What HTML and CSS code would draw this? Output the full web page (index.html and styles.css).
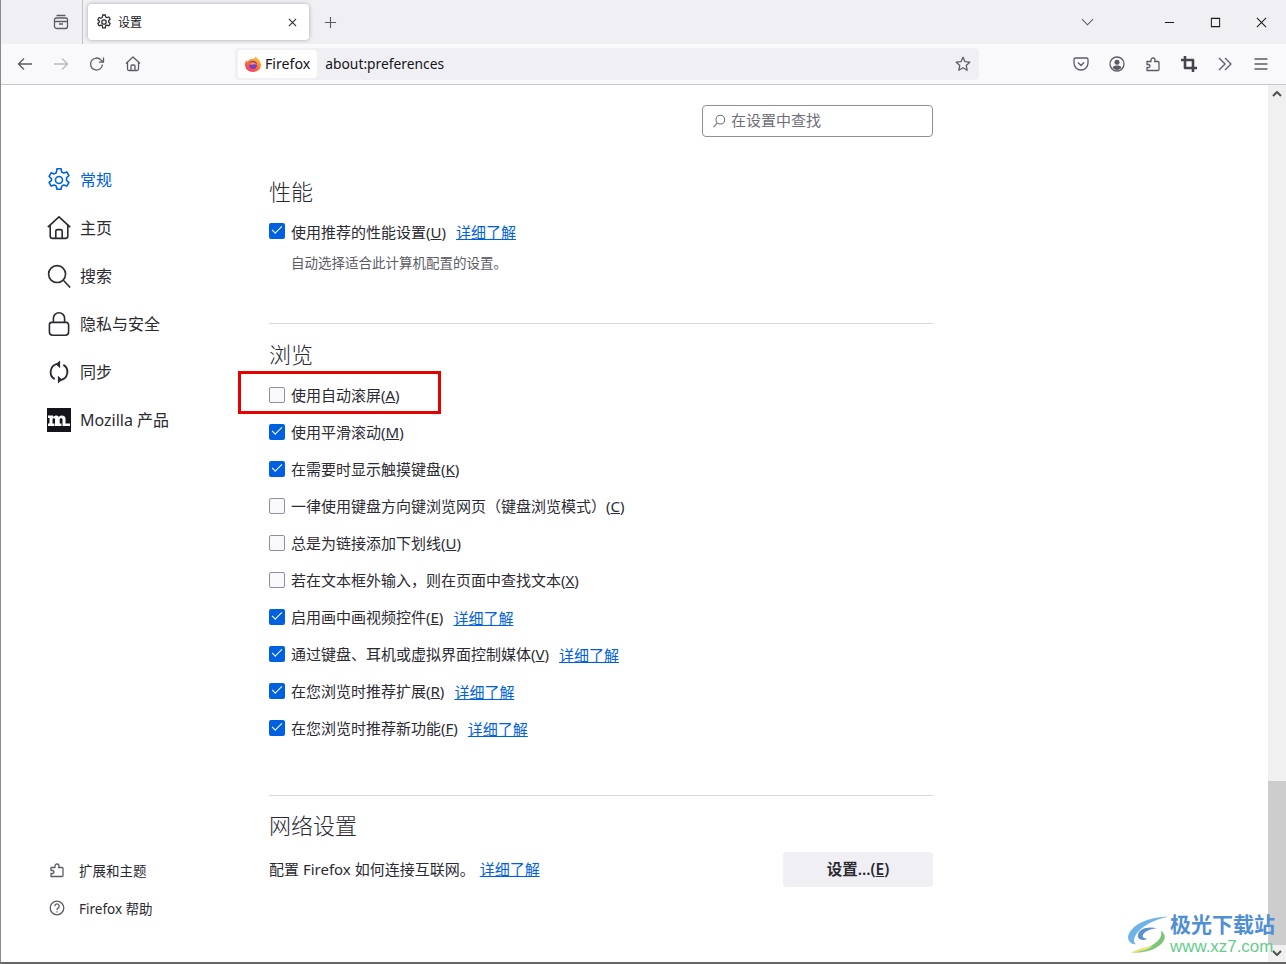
FILE: index.html
```html
<!DOCTYPE html>
<html lang="zh-CN">
<head>
    <meta charset="UTF-8">
    <title>设置</title>
    <link rel="stylesheet" href="styles.css">
</head>
<body>
    <!-- tab strip -->
    <div class="tabbar">
        <div class="tabs-side">
            <svg class="ico" viewBox="0 0 16 16"><path d="M3.500 1.500h9M1.500 5.500a1.500 1.500 0 0 1 1.500-1.500h10a1.500 1.500 0 0 1 1.500 1.500v7a2 2 0 0 1-2 2h-9a2 2 0 0 1-2-2zM1.500 7.500h13M6 10h4"/></svg>
        </div>
        <div class="tab">
            <svg class="ico tab-ico" viewBox="0 0 16 16"><use href="#gear"/></svg>
            <span class="tab-title">设置</span>
            <svg class="tab-close" viewBox="0 0 10 10"><path d="M1 1l8 8M9 1l-8 8"/></svg>
        </div>
        <svg class="new-tab" viewBox="0 0 14 14"><path d="M7 1v12M1 7h12"/></svg>
        <div class="tabbar-right">
            <svg class="tab-list" viewBox="0 0 14 8"><path d="M1 1l6 6 6-6"/></svg>
            <div class="win-btns">
                <svg viewBox="0 0 12 12"><path d="M1 6h10"/></svg>
                <svg viewBox="0 0 12 12"><path d="M1.500 1.500h9v9h-9z"/></svg>
                <svg viewBox="0 0 12 12"><path d="M1 1l10 10M11 1L1 11"/></svg>
            </div>
        </div>
    </div>

    <!-- toolbar -->
    <div class="toolbar">
        <div class="nav-btns">
            <svg class="ico" viewBox="0 0 16 16"><path d="M15 8H1.500M7 2.500L1.500 8 7 13.500"/></svg>
            <svg class="ico faded" viewBox="0 0 16 16"><path d="M1 8h13.500M9 2.500L14.500 8 9 13.500"/></svg>
            <svg class="ico" viewBox="0 0 16 16"><path d="M13.500 8.500a6 6 0 1 1-1.600-4.600L14 6M14.500 1.500V6.200H10"/></svg>
            <svg class="ico" viewBox="0 0 16 16"><use href="#home"/></svg>
        </div>
        <div class="urlbar">
            <div class="identity">
                <svg class="fx-logo" viewBox="0 0 16 16">
                    <defs>
                        <linearGradient id="fx-grad" x1="0.8" y1="0" x2="0.2" y2="1">
                            <stop offset="0" stop-color="#ffd02e"/>
                            <stop offset="0.5" stop-color="#ff7a2e"/>
                            <stop offset="1" stop-color="#f0356e"/>
                        </linearGradient>
                    </defs>
                    <path d="M10.500 0c.3 1.500 2 2 3.500 4 1.500 2 2 3.500 2 5a8 7 0 0 1-16 0c0-2 .5-3.500 1.500-5 0 1 .5 1.500 1 1.500C3.500 4 5 3 7 3c2 0 3.500-1 3.500-3z" fill="url(#fx-grad)"/>
                    <circle cx="8" cy="9" r="4" fill="#7a3bc8"/>
                    <path d="M4 8.500c1-2 3-2.500 5-2 1.500.5 2.500 1.500 3 3-1-1-2-1.500-3-1-1.500.2-3 .2-5 0z" fill="#ff9a2e"/>
                </svg>
                <span class="id-text">Firefox</span>
            </div>
            <span class="url-text">about:preferences</span>
            <svg class="ico url-star" viewBox="0 0 16 16"><path d="M8 1.300l2 4.400 4.800.5-3.600 3.200 1 4.800L8 11.700l-4.200 2.500 1-4.800L1.200 6.200 6 5.700z"/></svg>
        </div>
        <div class="tool-btns">
            <svg class="ico" viewBox="0 0 16 16"><path d="M2.500 2h11A1.500 1.500 0 0 1 15 3.500V7a7 7 0 0 1-14 0V3.500A1.500 1.500 0 0 1 2.500 2zM5 6.500l3 3 3-3"/></svg>
            <svg class="ico" viewBox="0 0 16 16"><circle cx="8" cy="8" r="7"/><circle class="solid" cx="8" cy="6.300" r="2.500"/><path class="solid" d="M3.500 11.500c1-1.500 2.500-2 4.500-2s3.500.5 4.500 2C11.500 13 10 14 8 14s-3.500-1-4.500-2.500z"/></svg>
            <svg class="ico" viewBox="0 0 16 16"><use href="#puzzle"/></svg>
            <svg class="ico crop" viewBox="0 0 16 16"><path d="M4 0v12h12M0 4h12v12"/></svg>
            <svg class="ico" viewBox="0 0 16 16"><path d="M2 2l6 6-6 6M8 2l6 6-6 6"/></svg>
            <svg class="ico" viewBox="0 0 16 16"><path d="M1.500 3h13M1.500 8h13M1.500 13h13"/></svg>
        </div>
    </div>

    <div class="page">
        <aside class="sidebar">
            <nav class="cat-list">
                <a class="cat active">
                    <svg class="cat-ico" viewBox="0.5 0.5 15 15"><use href="#gear"/></svg>
                    <span>常规</span>
                </a>
                <a class="cat">
                    <svg class="cat-ico" viewBox="0.5 0.5 15 15"><use href="#home"/></svg>
                    <span>主页</span>
                </a>
                <a class="cat">
                    <svg class="cat-ico" viewBox="0.5 0.5 15 15"><circle cx="6.800" cy="6.800" r="5.300"/><path d="M10.700 10.700l4.300 4.500"/></svg>
                    <span>搜索</span>
                </a>
                <a class="cat">
                    <svg class="cat-ico" viewBox="0.5 0.5 15 15"><path d="M4.500 7V4.500a3.500 3.500 0 0 1 7 0V7M3.500 7h9A1.500 1.500 0 0 1 14 8.500V13a2 2 0 0 1-2 2H4a2 2 0 0 1-2-2V8.500A1.500 1.500 0 0 1 3.500 7z"/></svg>
                    <span>隐私与安全</span>
                </a>
                <a class="cat">
                    <svg class="cat-ico sync" viewBox="1 1 22 22"><path d="M8 18.500A7.500 7.500 0 0 1 11 4.600M16 5.500A7.500 7.500 0 0 1 13 19.400"/><path class="solid" d="M9 4.800L13 1.500v7zM15 19.200L11 22.500v-7z"/></svg>
                    <span>同步</span>
                </a>
                <a class="cat">
                    <svg class="cat-ico" viewBox="0 0 24 24"><rect class="moz-box" width="24" height="24"/><path class="moz-m" d="M1 7.500h5l.5 1.500c1.200-2 4.300-2 5.300 0 1.200-2 6.200-2.200 6.700 1.200V15.500H23V18h-7.500V11.300c0-1.500-2.800-1.500-2.800 0V15.500H14.500V18H8V11.300c0-1.500-2.500-1.500-2.500 0V15.500H7.500V18H1V15.500H2.500V10H1z"/></svg>
                    <span>Mozilla 产品</span>
                </a>
            </nav>
            <div class="side-footer">
                <a class="side-link">
                    <svg class="ico" viewBox="0 0 16 16"><use href="#puzzle"/></svg>
                    <span>扩展和主题</span>
                </a>
                <a class="side-link">
                    <svg class="ico" viewBox="0 0 16 16"><circle cx="8" cy="8" r="6.800"/><path d="M5.800 6.200a2.200 2.200 0 1 1 3.400 1.800c-.8.500-1.200 1-1.200 2M8 11.300v1.200"/></svg>
                    <span>Firefox 帮助</span>
                </a>
            </div>
        </aside>

        <main class="content">
            <div class="search-row">
                <div class="search-box">
                    <svg class="search-ico" viewBox="0 0 16 16"><circle cx="9.500" cy="6.500" r="5"/><path d="M6 10.500L1.500 15"/></svg>
                    <span class="search-text">在设置中查找</span>
                </div>
            </div>

            <section class="section perf">
                <h2>性能</h2>
                <label class="check"><span class="box on"></span><span>使用推荐的性能设置(<u>U</u>)</span><a class="more">详细了解</a></label>
                <p class="hint">自动选择适合此计算机配置的设置。</p>
            </section>

            <section class="section browse">
                <h2>浏览</h2>
                <div class="check-list">
                    <label class="check marked"><span class="box"></span><span>使用自动滚屏(<u>A</u>)</span></label>
                    <label class="check"><span class="box on"></span><span>使用平滑滚动(<u>M</u>)</span></label>
                    <label class="check"><span class="box on"></span><span>在需要时显示触摸键盘(<u>K</u>)</span></label>
                    <label class="check"><span class="box"></span><span>一律使用键盘方向键浏览网页（键盘浏览模式）(<u>C</u>)</span></label>
                    <label class="check"><span class="box"></span><span>总是为链接添加下划线(<u>U</u>)</span></label>
                    <label class="check"><span class="box"></span><span>若在文本框外输入，则在页面中查找文本(<u>X</u>)</span></label>
                    <label class="check"><span class="box on"></span><span>启用画中画视频控件(<u>E</u>)</span><a class="more">详细了解</a></label>
                    <label class="check"><span class="box on"></span><span>通过键盘、耳机或虚拟界面控制媒体(<u>V</u>)</span><a class="more">详细了解</a></label>
                    <label class="check"><span class="box on"></span><span>在您浏览时推荐扩展(<u>R</u>)</span><a class="more">详细了解</a></label>
                    <label class="check"><span class="box on"></span><span>在您浏览时推荐新功能(<u>F</u>)</span><a class="more">详细了解</a></label>
                </div>
            </section>

            <section class="section network">
                <h2>网络设置</h2>
                <div class="net-row">
                    <p>配置 Firefox 如何连接互联网。<a class="more">详细了解</a></p>
                    <button class="btn">设置...(<u>E</u>)</button>
                </div>
            </section>
        </main>

        <div class="scrollbar">
            <svg class="arrow" viewBox="0 0 10 6"><path d="M1 5l4-4 4 4"/></svg>
            <div class="thumb"></div>
            <svg class="arrow" viewBox="0 0 10 6"><path d="M1 1l4 4 4-4"/></svg>
        </div>

        <!-- watermark over the page -->
        <div class="watermark">
            <svg class="wm-logo" viewBox="0 0 48 42">
                <path d="M46 1C30 1 10 6 3 20c-3 7 3 12 8 11C4 26 14 8 46 1z" fill="#6fb3e8"/>
                <path d="M34 14c-9-3-20 0-21 7-1 5 6 7 10 4-4 0-6-2-4-5 3-4 10-6 15-6z" fill="#5a8fd0"/>
                <path d="M38 16c3 8-6 16-19 20-5 2-10 3-13 4 12 1 32-3 36-15 1-4-1-7-4-9z" fill="#7cc576"/>
                <path d="M6 40c8 0 18-3 24-7-6 1-16 3-20 5z" fill="#eee27a"/>
            </svg>
            <div class="wm-text">
                <div class="wm-title">极光下载站</div>
                <div class="wm-url">www.xz7.com</div>
            </div>
        </div>
    </div>

    <!-- shared icons -->
    <svg class="defs" width="0" height="0">
        <defs>
            <path id="gear" d="M6.700 1h2.600l.4 2 1.300.7 1.900-.7 1.300 2.300-1.500 1.300v1.600l1.500 1.300-1.300 2.300-1.900-.7-1.300.7-.4 2H6.700l-.4-2-1.300-.7-1.900.7-1.300-2.300 1.500-1.300V7.100L1.800 5.800l1.300-2.300 1.900.7 1.300-.7zM8 5.800a2.200 2.200 0 1 0 0 4.400 2.200 2.200 0 0 0 0-4.400z"/>
            <path id="home" d="M1 7.500L8 1l7 6.500M2.500 6.500V13A1.500 1.500 0 0 0 4 14.500h8a1.500 1.500 0 0 0 1.500-1.500V6.500M6 14.500V10a1 1 0 0 1 1-1h2a1 1 0 0 1 1 1v4.500"/>
            <path id="puzzle" d="M5 14.500H2v-3h1.500a1.500 1.500 0 0 0 0-3H2V5.500h4V4a2 2 0 0 1 4 0c0 1-.5 1.500-.5 1.500H13a1 1 0 0 1 1 1v7a1 1 0 0 1-1 1z"/>
        </defs>
    </svg>
</body>
</html>
```

FILE: styles.css
```css
:root {
    --text-color: #15141a;
    --icon-color: #5b5b66;
    --link-color: #0061e0;
    --chrome-bg: #f0f0f4;
    --toolbar-bg: #f9f9fb;
    --line-color: #d7d7db;
}

html, body {
    height: 100%;
}

body {
    margin: 0;
    height: 964px;
    overflow: hidden;
    display: flex;
    flex-direction: column;
    box-sizing: border-box;
    background-color: #fff;
    border-left: 1px solid #8a8a8a;
    border-bottom: 2px solid #666;
    font-family: "Noto Sans", "Noto Sans CJK SC", sans-serif;
    font-size: 15px;
    color: var(--text-color);
}

svg {
    display: block;
    flex: none;
}

.ico {
    width: 16px;
    height: 16px;
    fill: none;
    color: var(--icon-color);
    stroke: var(--icon-color);
    stroke-width: 1.3;
    stroke-linejoin: round;
}

.solid {
    fill: currentColor;
    stroke: none;
}

.defs {
    position: absolute;
}

/* tab strip */
.tabbar {
    height: 44px;
    flex: none;
    display: flex;
    align-items: flex-start;
    background-color: var(--chrome-bg);
}

.tabs-side {
    width: 82px;
    height: 44px;
    box-sizing: border-box;
    padding: 14px 0 0 52px;
    border-right: 1px solid #c4c4c8;
}

.tab {
    width: 221px;
    height: 36px;
    margin: 4px 0 0 5px;
    padding: 0 12px 0 8px;
    box-sizing: border-box;
    display: flex;
    align-items: center;
    background-color: #fff;
    border-radius: 4px;
    box-shadow: 0 0 4px rgba(0,0,0,0.3);
}

.tab-ico {
    stroke: #2b2a33;
}

.tab-title {
    margin-left: 6px;
    font-size: 12px;
    flex: 1;
}

.tab-close {
    width: 9px;
    height: 9px;
    fill: none;
    stroke: #2b2a33;
    stroke-width: 1.2;
}

.new-tab {
    width: 13px;
    height: 13px;
    margin: 16px 0 0 15px;
    fill: none;
    stroke: var(--icon-color);
    stroke-width: 1.2;
}

.tabbar-right {
    flex: 1;
    display: flex;
    justify-content: flex-end;
    align-items: center;
    height: 44px;
}

.tab-list {
    width: 13px;
    height: 8px;
    margin-right: 70px;
    fill: none;
    stroke: #55555e;
    stroke-width: 1.1;
}

.win-btns {
    display: flex;
    gap: 35px;
    padding-right: 19px;
}

.win-btns svg {
    width: 11px;
    height: 11px;
    fill: none;
    stroke: #1a1a1a;
    stroke-width: 1.1;
}

/* toolbar */
.toolbar {
    height: 41px;
    flex: none;
    box-sizing: border-box;
    display: flex;
    align-items: center;
    background-color: var(--toolbar-bg);
    border-bottom: 1px solid #c8c8cc;
}

.nav-btns {
    width: 234px;
    box-sizing: border-box;
    padding-left: 16px;
    display: flex;
    gap: 20px;
}

.faded {
    opacity: 0.4;
}

.urlbar {
    width: 744px;
    height: 32px;
    box-sizing: border-box;
    display: flex;
    align-items: center;
    padding: 0 8px 0 3px;
    background-color: var(--chrome-bg);
    border-radius: 4px;
}

.identity {
    height: 28px;
    padding: 0 7px;
    display: flex;
    align-items: center;
    gap: 4px;
    background-color: #fff;
    border-radius: 4px;
}

.id-text {
    font-size: 14.2px;
    padding-bottom: 2px;
}

.fx-logo {
    width: 16px;
    height: 16px;
}

.url-text {
    margin-left: 8px;
    padding-bottom: 2px;
    flex: 1;
    font-size: 13.8px;
}

.tool-btns {
    margin-left: 94px;
    display: flex;
    gap: 20px;
}

.crop {
    stroke: #45454e;
    stroke-width: 2.6;
}

/* page */
.page {
    flex: 1;
    min-height: 0;
    position: relative;
    display: flex;
}

.sidebar {
    width: 268px;
    flex: none;
    box-sizing: border-box;
    padding: 83px 0 0 46px;
    display: flex;
    flex-direction: column;
    justify-content: space-between;
}

.cat-list {
    display: flex;
    flex-direction: column;
    gap: 24px;
}

.cat {
    height: 24px;
    display: flex;
    align-items: center;
    gap: 9px;
    font-size: 16px;
    color: #2b2a33;
}

.cat span {
    padding-bottom: 2px;
}

.cat-ico {
    width: 24px;
    height: 24px;
    fill: none;
    color: #2b2a33;
    stroke: #2b2a33;
    stroke-width: 1;
    stroke-linejoin: round;
}

.sync {
    stroke-width: 1.7;
}

.cat.active {
    color: var(--link-color);
}

.cat.active .cat-ico {
    stroke: var(--link-color);
}

.moz-box {
    fill: #15141a;
    stroke: none;
}

.moz-m {
    fill: #fff;
    stroke: none;
}

.side-footer {
    padding: 0 0 45px 2px;
    display: flex;
    flex-direction: column;
    gap: 20px;
}

.side-link {
    height: 18px;
    display: flex;
    align-items: center;
    gap: 14px;
    font-size: 13.5px;
    color: #2b2a33;
}

.content {
    width: 664px;
    flex: none;
}

.search-row {
    height: 32px;
    margin-top: 20px;
    display: flex;
    justify-content: flex-end;
}

.search-box {
    width: 231px;
    box-sizing: border-box;
    display: flex;
    align-items: center;
    gap: 5px;
    padding-left: 9px;
    border: 1px solid #8f8f9d;
    border-radius: 4px;
    font-size: 15px;
    color: #6f6f78;
}

.search-text {
    padding-bottom: 3px;
}

.search-ico {
    width: 14px;
    height: 14px;
    fill: none;
    stroke: #6f6f78;
    stroke-width: 1.2;
}

.section h2 {
    margin: 0;
    font-size: 22px;
    font-weight: 300;
    line-height: 30px;
    color: #2b2a33;
}

.perf {
    margin-top: 39px;
    height: 147px;
    border-bottom: 1px solid var(--line-color);
}

.perf .check {
    margin-top: 13px;
}

.browse {
    padding-top: 15px;
    height: 456px;
    box-sizing: content-box;
    border-bottom: 1px solid var(--line-color);
}

.check-list {
    margin-top: 14px;
    display: flex;
    flex-direction: column;
    gap: 13px;
}

.check-list .box + span {
    padding-bottom: 2px;
}

.check {
    height: 24px;
    display: flex;
    align-items: center;
    font-size: 15px;
    color: #2b2a33;
}

.marked {
    position: relative;
}

/* red box the screenshot author drew around the row */
.marked::after {
    content: "";
    position: absolute;
    left: -31px;
    top: -12px;
    width: 197px;
    height: 37px;
    border: 3px solid #e60000;
}

.box {
    width: 16px;
    height: 16px;
    box-sizing: border-box;
    margin-right: 6px;
    flex: none;
    border: 1px solid #8f8f9d;
    border-radius: 2px;
    background-color: #f9f9fb;
}

.box.on {
    border: none;
    background-color: var(--link-color);
    position: relative;
}

.box.on::after {
    content: "";
    position: absolute;
    left: 3px;
    top: 3px;
    width: 9px;
    height: 4px;
    border: solid #fff;
    border-width: 0 0 1.4px 1.4px;
    transform: rotate(-45deg);
}

.more {
    margin-left: 10px;
    color: var(--link-color);
    text-decoration: underline;
}

.hint {
    margin: 10px 0 0 22px;
    font-size: 13.5px;
    line-height: 20px;
    color: #5b5b66;
}

.network {
    padding-top: 14px;
}

.net-row {
    margin-top: 12px;
    display: flex;
    justify-content: space-between;
    align-items: center;
}

.net-row p {
    margin: 0;
    padding-bottom: 3px;
    font-size: 15px;
    color: #2b2a33;
}

.net-row .more {
    margin-left: 5px;
}

.btn {
    width: 150px;
    height: 35px;
    padding: 0 0 3px;
    border: none;
    border-radius: 4px;
    background-color: #f0f0f4;
    font-family: inherit;
    font-size: 15.5px;
    font-weight: 600;
    color: #2b2a33;
}

.scrollbar {
    margin-left: auto;
    width: 18px;
    flex: none;
    display: flex;
    flex-direction: column;
    align-items: center;
    justify-content: space-between;
    position: relative;
    background-color: #f0f0f0;
    padding: 6px 0;
    box-sizing: border-box;
}

.arrow {
    width: 10px;
    height: 6px;
    fill: none;
    stroke: #505050;
    stroke-width: 2;
}

.thumb {
    position: absolute;
    left: 0;
    right: 0;
    top: 696px;
    bottom: 17px;
    background-color: #cdcdcd;
}

.watermark {
    position: absolute;
    left: 1125px;
    top: 828px;
    display: flex;
    align-items: flex-start;
    font-family: "Liberation Sans", "Noto Sans CJK SC", sans-serif;
}

.wm-logo {
    width: 44px;
    height: 40px;
    margin-top: 2px;
}

.wm-title {
    font-size: 21px;
    font-weight: 700;
    color: #4f8fd4;
    line-height: 24px;
    white-space: nowrap;
}

.wm-url {
    font-size: 16.9px;
    color: #63cc8a;
    line-height: 20px;
    white-space: nowrap;
}
```
